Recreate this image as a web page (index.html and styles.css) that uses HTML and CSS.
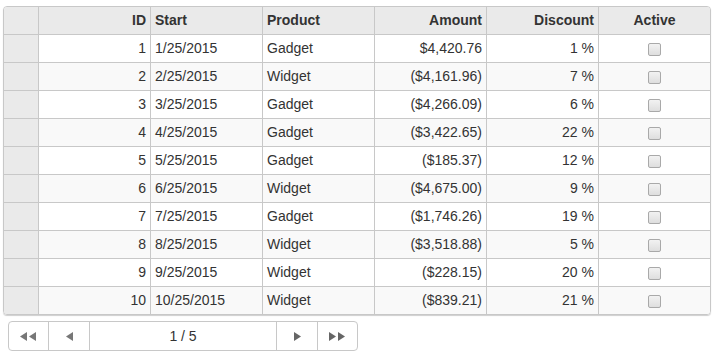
FILE: index.html
```html
<!DOCTYPE html>
<html>
<head>
<meta charset="utf-8">
<link rel="stylesheet" href="styles.css">
</head>
<body>
<div class="page">
  <div class="grid">
    <table class="tbl">
      <colgroup>
        <col class="c-rh"><col class="c"><col class="c"><col class="c"><col class="c"><col class="c"><col class="c">
      </colgroup>
      <thead>
        <tr>
          <th class="rh"></th>
          <th class="r">ID</th>
          <th class="l">Start</th>
          <th class="l">Product</th>
          <th class="r">Amount</th>
          <th class="r">Discount</th>
          <th class="c-al">Active</th>
        </tr>
      </thead>
      <tbody>
        <tr><td class="rh"></td><td class="r">1</td><td class="l">1/25/2015</td><td class="l">Gadget</td><td class="r">$4,420.76</td><td class="r">1 %</td><td class="c-al"><span class="cb"></span></td></tr>
        <tr class="alt"><td class="rh"></td><td class="r">2</td><td class="l">2/25/2015</td><td class="l">Widget</td><td class="r">($4,161.96)</td><td class="r">7 %</td><td class="c-al"><span class="cb"></span></td></tr>
        <tr><td class="rh"></td><td class="r">3</td><td class="l">3/25/2015</td><td class="l">Gadget</td><td class="r">($4,266.09)</td><td class="r">6 %</td><td class="c-al"><span class="cb"></span></td></tr>
        <tr class="alt"><td class="rh"></td><td class="r">4</td><td class="l">4/25/2015</td><td class="l">Gadget</td><td class="r">($3,422.65)</td><td class="r">22 %</td><td class="c-al"><span class="cb"></span></td></tr>
        <tr><td class="rh"></td><td class="r">5</td><td class="l">5/25/2015</td><td class="l">Gadget</td><td class="r">($185.37)</td><td class="r">12 %</td><td class="c-al"><span class="cb"></span></td></tr>
        <tr class="alt"><td class="rh"></td><td class="r">6</td><td class="l">6/25/2015</td><td class="l">Widget</td><td class="r">($4,675.00)</td><td class="r">9 %</td><td class="c-al"><span class="cb"></span></td></tr>
        <tr><td class="rh"></td><td class="r">7</td><td class="l">7/25/2015</td><td class="l">Gadget</td><td class="r">($1,746.26)</td><td class="r">19 %</td><td class="c-al"><span class="cb"></span></td></tr>
        <tr class="alt"><td class="rh"></td><td class="r">8</td><td class="l">8/25/2015</td><td class="l">Widget</td><td class="r">($3,518.88)</td><td class="r">5 %</td><td class="c-al"><span class="cb"></span></td></tr>
        <tr><td class="rh"></td><td class="r">9</td><td class="l">9/25/2015</td><td class="l">Widget</td><td class="r">($228.15)</td><td class="r">20 %</td><td class="c-al"><span class="cb"></span></td></tr>
        <tr class="alt last"><td class="rh"></td><td class="r">10</td><td class="l">10/25/2015</td><td class="l">Widget</td><td class="r">($839.21)</td><td class="r">21 %</td><td class="c-al"><span class="cb"></span></td></tr>
      </tbody>
    </table>
  </div>
  <div class="pager">
    <div class="pbtn">
      <svg width="18" height="9" viewBox="0 0 18 9"><polygon points="0,4.5 7,0 7,9" fill="#777"/><polygon points="9,4.5 16,0 16,9" fill="#777"/></svg>
    </div>
    <div class="pbtn w41">
      <svg width="7" height="9" viewBox="0 0 7 9"><polygon points="0,4.5 7,0 7,9" fill="#777"/></svg>
    </div>
    <div class="ptext">1 / 5</div>
    <div class="pbtn w41">
      <svg width="7" height="9" viewBox="0 0 7 9"><polygon points="7,4.5 0,0 0,9" fill="#666"/></svg>
    </div>
    <div class="pbtn last">
      <svg width="18" height="9" viewBox="0 0 18 9"><polygon points="7,4.5 0,0 0,9" fill="#666"/><polygon points="16,4.5 9,0 9,9" fill="#666"/></svg>
    </div>
  </div>
</div>
</body>
</html>
```

FILE: styles.css
```css
html, body {
  margin: 0;
  padding: 0;
  background: #fff;
}
body {
  font-family: "Liberation Sans", Arial, sans-serif;
  font-size: 14px;
  color: #333;
}
.page {
  padding: 6px 0 0 3px;
}
.grid {
  width: 706px;
  border: 1px solid #c8c8c8;
  border-radius: 4px;
  overflow: hidden;
  box-shadow: 0 1px 1px #cfcfcf;
}
.tbl {
  border-collapse: separate;
  border-spacing: 0;
  table-layout: fixed;
  width: 706px;
}
.c-rh { width: 35px; }
.c { width: 112px; }
.tbl col:last-child { width: 111px; }
.tbl th, .tbl td {
  height: 26px;
  padding: 0 4px 1px 4px;
  border-right: 1px solid #c8c8c8;
  border-bottom: 1px solid #c8c8c8;
  white-space: nowrap;
  overflow: hidden;
  box-sizing: content-box;
  line-height: 16px;
}
.tbl th:last-child, .tbl td:last-child {
  border-right: none;
}
.tbl tr.last td {
  border-bottom: none;
}
.tbl th {
  background: #eaeaea;
  font-weight: bold;
}
.tbl td {
  background: #fff;
}
.tbl tr.alt td {
  background: #f9f9f9;
}
.tbl td.rh, .tbl tr.alt td.rh, .tbl th.rh {
  background: #eaeaea;
  padding: 0;
  height: 27px;
}
.r { text-align: right; }
.l { text-align: left; }
.c-al { text-align: center; }
.cb {
  display: inline-block;
  width: 11px;
  height: 11px;
  border: 1px solid #a9a9a9;
  border-radius: 2px;
  background: linear-gradient(#f2f2f2, #dedede);
  vertical-align: middle;
  position: relative;
  top: 0;
}
.pager {
  margin: 6px 0 0 5px;
  display: flex;
  width: 348px;
  height: 28px;
  border: 1px solid #c8c8c8;
  border-radius: 4px;
}
.pbtn {
  width: 39px;
  border-right: 1px solid #c8c8c8;
  display: flex;
  align-items: center;
  justify-content: center;
}
.pbtn.w41 { width: 40px; }
.pbtn.last { border-right: none; }
.ptext {
  flex: 1;
  border-right: 1px solid #c8c8c8;
  display: flex;
  align-items: center;
  justify-content: center;
}
```
